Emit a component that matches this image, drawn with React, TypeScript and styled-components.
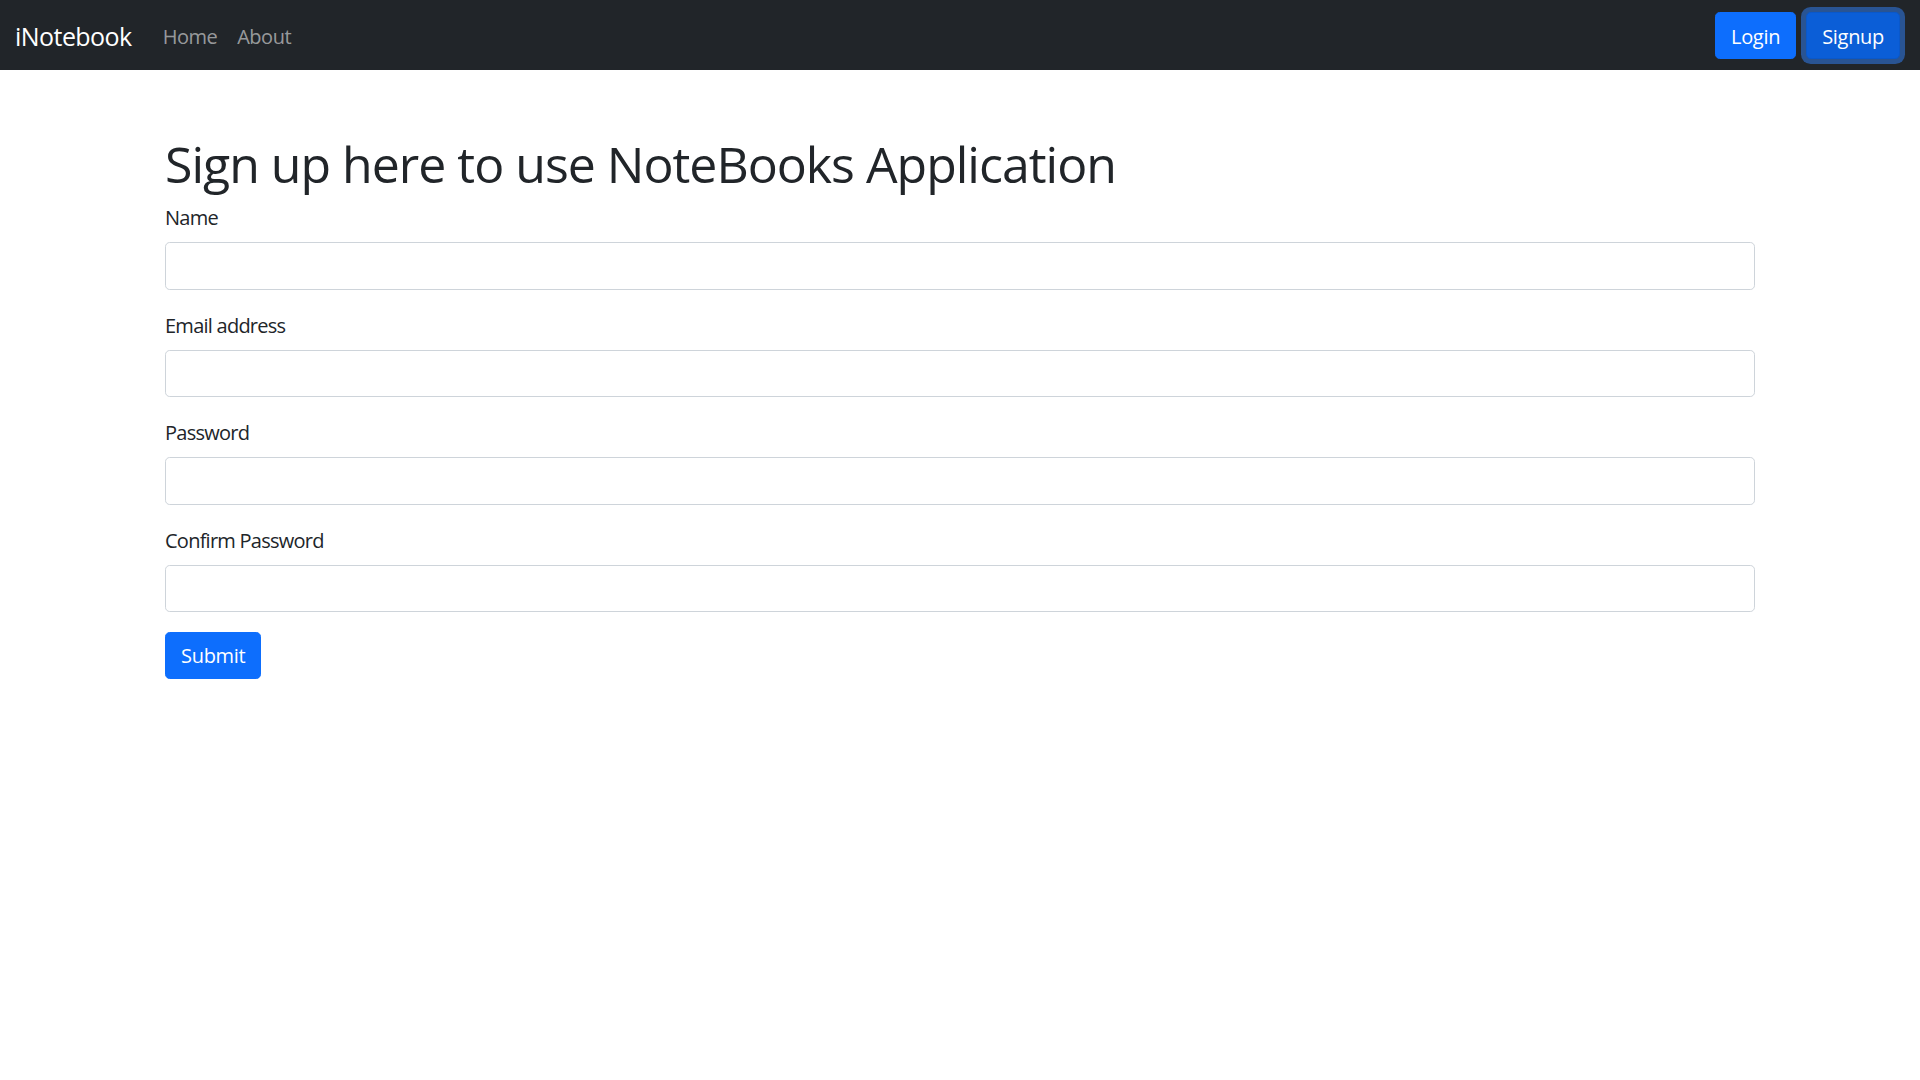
import React from "react";
import styled, { createGlobalStyle } from "styled-components";

const GlobalStyle = createGlobalStyle`
  *, *::before, *::after { box-sizing: border-box; }
  html, body { margin: 0; padding: 0; background: #fff; }
  body {
    font-family: "Open Sans", "Noto Sans", "Liberation Sans", sans-serif;
    font-size: 20px;
    line-height: 1.5;
    color: #212529;
  }
`;

const NavBar = styled.nav`
  height: 70px;
  background: #212529;
  display: flex;
  align-items: center;
  justify-content: space-between;
  padding: 0 15px;
`;

const NavLeft = styled.div`
  display: flex;
  align-items: center;
  padding-top: 4px;
`;

const Brand = styled.a`
  color: #fff;
  font-size: 25px;
  line-height: 1.5;
  text-decoration: none;
  margin-right: 21px;
  letter-spacing: -0.55px;
`;

const NavLinks = styled.ul`
  display: flex;
  list-style: none;
  margin: 0;
  padding: 0;
`;

const NavLink = styled.a`
  display: block;
  color: rgba(255, 255, 255, 0.55);
  text-decoration: none;
  font-size: 20px;
  padding: 10px 10px;
  letter-spacing: -0.5px;
`;

const NavRight = styled.div`
  display: flex;
  align-items: center;
`;

const Button = styled.button<{ $active?: boolean }>`
  font-family: inherit;
  font-size: 20px;
  line-height: 1.5;
  color: #fff;
  background: ${(p) => (p.$active ? "#0b5ed7" : "#0d6efd")};
  border: 1.25px solid ${(p) => (p.$active ? "#0a58ca" : "#0d6efd")};
  border-radius: 4.7px;
  padding: 9.5px 15px 5.5px;
  margin: 0 5px;
  letter-spacing: -0.3px;
  box-shadow: ${(p) => (p.$active ? "0 0 0 5px rgba(49, 132, 253, 0.5)" : "none")};
  cursor: pointer;
`;

const SubmitButton = styled(Button)`
  margin: 0;
  padding: 8px 15px 7px;
`;

const Container = styled.main`
  max-width: 1620px;
  margin: 0 auto;
  padding: 0 15px;
`;

const Heading = styled.h1`
  font-size: 50px;
  font-weight: 400;
  line-height: 1.2;
  margin: 64px 0 8px;
  letter-spacing: -1px;
`;

const Field = styled.div`
  margin-bottom: 20px;
`;

const Label = styled.label`
  display: block;
  font-size: 20px;
  line-height: 30px;
  padding-top: 1px;
  margin-bottom: 9px;
  letter-spacing: -0.75px;
`;

const Input = styled.input`
  display: block;
  width: 100%;
  height: 47.5px;
  font-family: inherit;
  font-size: 20px;
  padding: 7.5px 15px;
  border: 1.25px solid #ced4da;
  border-radius: 4.7px;
  background: #fff;
  color: #212529;
  outline: none;
`;

const fields = [
  { id: "name", label: "Name", type: "text" },
  { id: "email", label: "Email address", type: "email" },
  { id: "password", label: "Password", type: "password" },
  { id: "cpassword", label: "Confirm Password", type: "password" },
];

export default function App() {
  return (
    <>
      <GlobalStyle />
      <NavBar>
        <NavLeft>
          <Brand href="#">iNotebook</Brand>
          <NavLinks>
            <li><NavLink href="#">Home</NavLink></li>
            <li><NavLink href="#">About</NavLink></li>
          </NavLinks>
        </NavLeft>
        <NavRight>
          <Button>Login</Button>
          <Button $active>Signup</Button>
        </NavRight>
      </NavBar>
      <Container>
        <Heading>Sign up here to use NoteBooks Application</Heading>
        <form onSubmit={(e) => e.preventDefault()}>
          {fields.map((f) => (
            <Field key={f.id}>
              <Label htmlFor={f.id}>{f.label}</Label>
              <Input id={f.id} name={f.id} type={f.type} />
            </Field>
          ))}
          <SubmitButton type="submit">Submit</SubmitButton>
        </form>
      </Container>
    </>
  );
}
